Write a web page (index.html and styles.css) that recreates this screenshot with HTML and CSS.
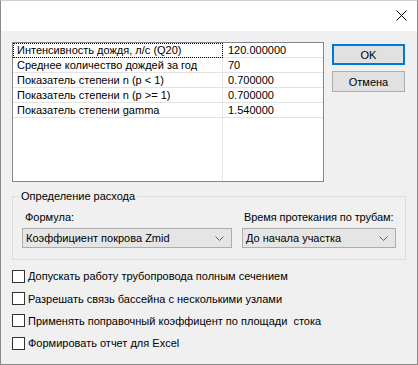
FILE: index.html
```html
<!DOCTYPE html>
<html lang="ru">
<head>
    <meta charset="UTF-8">
    <title>Параметры дождя</title>
    <link rel="stylesheet" href="styles.css">
</head>
<body>

    <div class="window">
        <div class="titlebar">
            <svg class="close" width="11" height="11" viewBox="0 0 11 11">
                <path d="M0.5 0.5 L10.5 10.5 M10.5 0.5 L0.5 10.5" stroke="#000" stroke-width="1" fill="none"/>
            </svg>
        </div>

        <div class="content">
            <div class="top">
                <div class="listbox">
                    <table class="grid">
                        <tr><td class="focus">Интенсивность дождя, л/с (Q20)</td><td>120.000000</td></tr>
                        <tr><td>Среднее количество дождей за год</td><td>70</td></tr>
                        <tr><td>Показатель степени n (p &lt; 1)</td><td>0.700000</td></tr>
                        <tr><td>Показатель степени n (p &gt;= 1)</td><td>0.700000</td></tr>
                        <tr><td>Показатель степени gamma</td><td>1.540000</td></tr>
                        <tr class="empty"><td></td><td></td></tr>
                    </table>
                </div>
                <div class="buttons">
                    <button class="btn default">OK</button>
                    <button class="btn">Отмена</button>
                </div>
            </div>

            <fieldset class="group">
                <legend>Определение расхода</legend>
                <div class="fields">
                    <div class="field wide">
                        <label>Формула:</label>
                        <div class="combo">
                            <span>Коэффициент покрова Zmid</span>
                            <svg width="9" height="5" viewBox="0 0 9 5"><path d="M0.5 0.5 L4.5 4.5 L8.5 0.5" stroke="#606060" fill="none"/></svg>
                        </div>
                    </div>
                    <div class="field narrow">
                        <label>Время протекания по трубам:</label>
                        <div class="combo">
                            <span>До начала участка</span>
                            <svg width="9" height="5" viewBox="0 0 9 5"><path d="M0.5 0.5 L4.5 4.5 L8.5 0.5" stroke="#606060" fill="none"/></svg>
                        </div>
                    </div>
                </div>
            </fieldset>

            <div class="checks">
                <div class="check"><span class="box"></span>Допускать работу трубопровода полным сечением</div>
                <div class="check"><span class="box"></span>Разрешать связь бассейна с несколькими узлами</div>
                <div class="check"><span class="box"></span>Применять поправочный коэффицент по площади&nbsp; стока</div>
                <div class="check"><span class="box"></span>Формировать отчет для Excel</div>
            </div>
        </div>
    </div>

</body>
</html>
```

FILE: styles.css
```css
body {
    margin: 0;
    font-family: "Liberation Sans", Arial, sans-serif;
    font-size: 11px;
    color: #000;
}
.window {
    width: 418px;
    height: 365px;
    box-sizing: border-box;
    border: 1px solid #8a8a8a;
    border-top-color: #cfcfcf;
    background: #f0f0f0;
}
.titlebar {
    height: 30px;
    background: #fff;
    display: flex;
    align-items: center;
    justify-content: flex-end;
    padding-right: 10px;
}
.close {
    margin-top: -1px;
}
.content {
    padding: 11px 11px 0 11px;
}
.top {
    display: flex;
    gap: 8px;
}
.listbox {
    width: 312px;
    height: 140px;
    box-sizing: border-box;
    border: 1px solid #828790;
    background: #fff;
}
.grid {
    width: 100%;
    height: 100%;
    border-collapse: collapse;
    table-layout: fixed;
}
.grid td {
    height: 14px;
    padding: 0 0 0 4px;
    line-height: 14px;
    border-bottom: 1px solid #e3e3e3;
    white-space: nowrap;
}
.grid td:first-child {
    width: 205px;
    border-right: 1px solid #e3e3e3;
}
.grid td:last-child {
    padding-left: 5px;
}
.grid .empty td {
    height: auto;
    border-bottom: none;
}
.grid .focus {
    outline: 1px dotted #000;
    outline-offset: -1px;
}
.buttons {
    display: flex;
    flex-direction: column;
    gap: 6px;
    padding-top: 2px;
}
.btn {
    width: 73px;
    height: 21px;
    padding: 0;
    background: #e1e1e1;
    border: 1px solid #adadad;
    font-family: inherit;
    font-size: 11px;
    color: #000;
}
.btn.default {
    border: 2px solid #0078d7;
}
.group {
    margin: 8px 0 0 0;
    padding: 8px 9px 11px 9px;
    border: 1px solid #dcdcdc;
    min-width: 0;
}
.group legend {
    padding: 0 2px;
    margin-left: -3px;
    line-height: 13px;
}
.fields {
    display: flex;
    justify-content: space-between;
}
.field label {
    display: block;
    padding-left: 3px;
    line-height: 13px;
    margin-bottom: 4px;
    white-space: nowrap;
}
.field.wide {
    width: 210px;
}
.field.narrow {
    width: 154px;
}
.field.narrow label {
    padding-left: 2px;
    letter-spacing: -0.1px;
}
.combo {
    height: 20px;
    box-sizing: border-box;
    border: 1px solid #adadad;
    background: #e5e5e5;
    display: flex;
    align-items: center;
    justify-content: space-between;
    padding: 0 7px 0 3px;
}
.checks {
    padding-top: 5px;
}
.check {
    height: 22.4px;
    display: flex;
    align-items: center;
    gap: 3px;
}
.box {
    width: 13px;
    height: 13px;
    box-sizing: border-box;
    border: 1px solid #333;
    background: #fff;
}
```
